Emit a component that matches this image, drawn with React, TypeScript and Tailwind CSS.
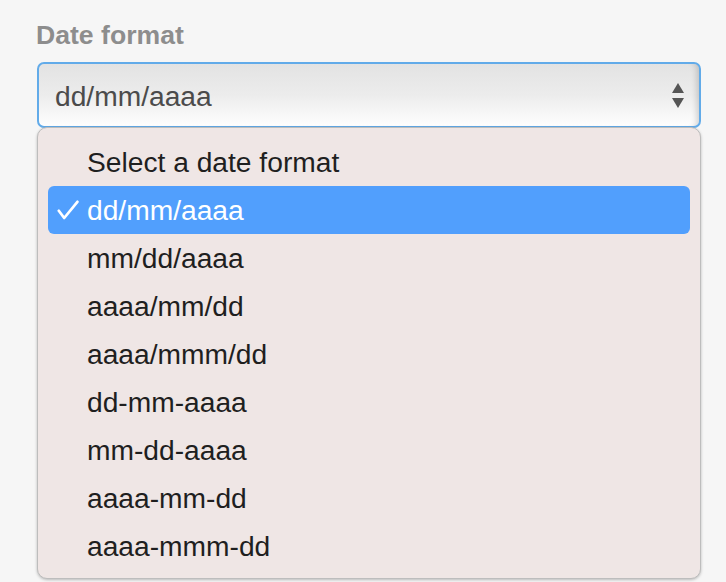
const formats = [
  "Select a date format",
  "dd/mm/aaaa",
  "mm/dd/aaaa",
  "aaaa/mm/dd",
  "aaaa/mmm/dd",
  "dd-mm-aaaa",
  "mm-dd-aaaa",
  "aaaa-mm-dd",
  "aaaa-mmm-dd",
];

const selected = "dd/mm/aaaa";

function Check() {
  return (
    <svg width="22" height="20" viewBox="0 0 22 20" className="ml-[9px]">
      <path
        d="M1.8 10.8 L7.2 18 L20.4 1.8"
        fill="none"
        stroke="white"
        strokeWidth="2.7"
        strokeLinecap="round"
        strokeLinejoin="round"
      />
    </svg>
  );
}

export default function App() {
  return (
    <div className="w-[726px] h-[582px] overflow-hidden bg-[#f6f6f6] pl-[37px] pt-[20px] font-['Liberation_Sans',Arial,sans-serif]">
      <label className="block text-[26.6px] leading-[30px] font-bold text-[#8d8d8d] -ml-[1px]">
        Date format
      </label>

      <div className="relative mt-[12px] w-[664px]">
        <div className="h-[66px] rounded-[7px] border-2 border-[#62abe9] bg-gradient-to-b from-[#e3e3e3] via-[#ececec] to-[#fefefe] shadow-[inset_-8px_0_6px_-6px_rgba(0,0,0,0.18)] flex items-start pl-[16px] pr-[15px] pt-[16px]">
          <span className="flex-1 text-[28.2px] leading-[32px] text-[#4b4b4b]">
            {selected}
          </span>
          <svg width="12" height="26" viewBox="0 0 12 26" className="mt-[3px]">
            <path d="M6 0 L12 10 L0 10 Z" fill="#555" />
            <path d="M0 15 L12 15 L6 25 Z" fill="#555" />
          </svg>
        </div>

        <div className="absolute left-0 top-[65px] w-[664px] rounded-[10px] border border-[#bdbdbd] bg-[#efe6e5] px-[10px] pt-[10px] pb-[8px] shadow-[0_1px_3px_rgba(0,0,0,0.25)]">
          {formats.map((f) => {
            const active = f === selected;
            return (
              <div
                key={f}
                className={
                  active
                    ? "flex items-center h-[48px] rounded-[6px] bg-[#519ffd] text-white"
                    : "flex items-center h-[48px] text-[#1f1f1f]"
                }
              >
                <div className="w-[39px] flex items-center">{active && <Check />}</div>
                <span className="text-[28.2px] leading-[48px]">{f}</span>
              </div>
            );
          })}
        </div>
      </div>
    </div>
  );
}
